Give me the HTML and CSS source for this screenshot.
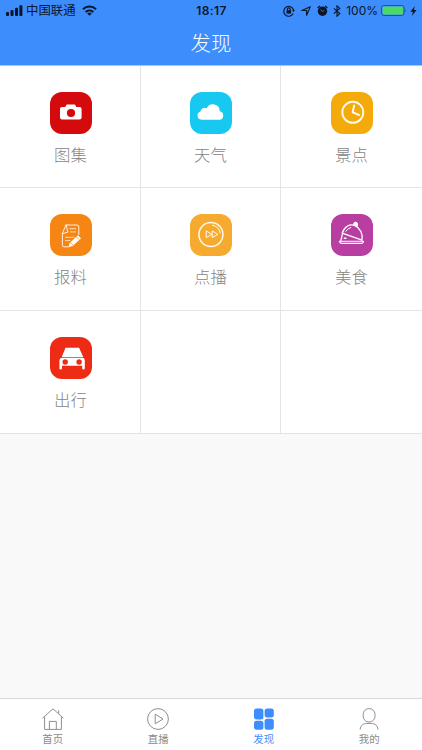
FILE: index.html
```html
<!DOCTYPE html>
<html lang="zh-CN">
<head>
  <meta charset="UTF-8" />
  <meta name="viewport" content="width=device-width, initial-scale=1.0"/>
  <title>发现</title>
  <link rel="stylesheet" href="styles.css">
</head>
<body>
  <div class="app">
    <header class="header">
      <div class="status-bar">
        <div class="status-left">
          <svg class="signal" width="17" height="11" viewBox="0 0 17 11">
            <rect x="0" y="7" width="3" height="4" rx="1"/>
            <rect x="4.5" y="5" width="3" height="6" rx="1"/>
            <rect x="9" y="2.8" width="3" height="8.2" rx="1"/>
            <rect x="13.4" y="0.3" width="3" height="10.7" rx="1"/>
          </svg>
          <span class="carrier">中国联通</span>
          <svg class="wifi" width="15" height="11" viewBox="0 0 15 11" fill="none" stroke="#0a1528" stroke-width="2">
            <path d="M1 4.3C4.6 .7 10.4 .7 14 4.3"/>
            <path d="M3.6 7C5.8 4.9 9.2 4.9 11.4 7"/>
            <path d="M5.2 8.5Q7.5 6.7 9.8 8.5L7.5 10.8z" fill="#0a1528" stroke="none"/>
          </svg>
        </div>
        <span class="time">18:17</span>
        <div class="status-right">
          <svg width="12" height="12" viewBox="0 0 12 12" fill="none" stroke="#0a1528" stroke-width="1.1">
            <path d="M10.2 8.6A5 5 0 1 1 10.6 5"/>
            <path d="M9 5h3l-1.5 2z" fill="#0a1528" stroke="none"/>
            <rect x="3.5" y="5.2" width="4.6" height="3.4" fill="#0a1528" stroke="none"/>
            <path d="M4.4 5.4V4.3a1.4 1.4 0 0 1 2.8 0v1.1"/>
          </svg>
          <svg class="location" width="10" height="10" viewBox="0 0 10 10" fill="none" stroke="#0a1528" stroke-width="1.1" stroke-linejoin="round">
            <path d="M9.3 .7L5.6 9.2V4.5H.8z"/>
          </svg>
          <svg class="alarm" width="11" height="12" viewBox="0 0 11 12">
            <circle cx="5.5" cy="6.2" r="4.7"/>
            <path d="M.6 3L3 .9M10.4 3L8 .9" stroke="#0a1528" stroke-width="1.3"/>
            <path d="M3.4 4.6L5.5 6.5 7.3 5.5" fill="none" stroke="#3e8dfd" stroke-width=".8"/>
          </svg>
          <svg class="bluetooth" width="8" height="12" viewBox="0 0 8 12" fill="none" stroke="#0a1528" stroke-width="1.1">
            <path d="M.8 3.3L6.8 8.6 4 11.2V.8L6.8 3.4.8 8.7"/>
          </svg>
          <span class="percent">100%</span>
          <svg class="battery" width="26" height="11" viewBox="0 0 26 11">
            <rect x=".5" y=".5" width="22.6" height="10" rx="2.4" fill="none" stroke="#245293"/>
            <rect x="1.6" y="1.6" width="20.4" height="7.8" rx="1.3" fill="#4cda64"/>
            <path d="M24 3.7q1.5 1.8 0 3.6z" fill="#245293"/>
          </svg>
          <svg class="bolt" width="7" height="10" viewBox="0 0 7 10">
            <path d="M4.8 0L.4 5.7H3L1.8 10 6.6 4.1H3.9z"/>
          </svg>
        </div>
      </div>
      <h1 class="title">发现</h1>
    </header>

    <main class="grid">
      <a class="cell">
        <svg class="icon red" viewBox="0 0 42 42">
          <path d="M12 15h3.2l1.5-2.4h8.2l1.5 2.4h3.2q2 0 2 2v8.4q0 2-2 2H12q-2 0-2-2V17q0-2 2-2z" fill="#fff"/>
          <circle cx="21" cy="21" r="4.1" fill="#d40a0d"/>
        </svg>
        <span class="label">图集</span>
      </a>
      <a class="cell">
        <svg class="icon cyan" viewBox="0 0 42 42">
          <path d="M11.5 27.7a4.2 4.2 0 0 1-1-8.2 4.2 4.2 0 0 1 6.2-3.2 6.8 6.8 0 0 1 13 3 4.3 4.3 0 0 1 .3 8.4z" fill="#fff"/>
        </svg>
        <span class="label">天气</span>
      </a>
      <a class="cell">
        <svg class="icon amber" viewBox="0 0 42 42" fill="none" stroke="#fffbe8" stroke-linecap="round" stroke-linejoin="round">
          <circle cx="21.8" cy="20.3" r="10.5" stroke-width="1.9"/>
          <path d="M23.1 13.6L21.7 20.3 28 23" stroke-width="2"/>
        </svg>
        <span class="label">景点</span>
      </a>
      <a class="cell">
        <svg class="icon orange" viewBox="0 0 42 42" fill="none" stroke="#fff3e2" stroke-width="1" stroke-linecap="round" stroke-linejoin="round">
          <path d="M16 11h10.8q2 0 2 2v7.6M12.4 19.7v11.5q0 1.6 1.6 1.6h4.8M12.4 19.4l3.6-8.6 1.8 7z"/>
          <path d="M19.8 14.7h5.7M20.4 17.9h5.2M15.5 23.3h8.5M15.5 26.6h4.5" stroke-width=".8"/>
          <path d="M18.8 33l.8-4 8.4-7.8 3 3.2-8.4 7.6z" fill="#fff" stroke="none"/>
          <path d="M20.6 28.5l2.4 2.5M26.6 22.9l2.4 2.5" stroke="#f58614" stroke-width=".7"/>
        </svg>
        <span class="label">报料</span>
      </a>
      <a class="cell">
        <svg class="icon yellow" viewBox="0 0 42 42" fill="none" stroke="#fffbe8" stroke-linecap="round" stroke-linejoin="round">
          <circle cx="20.9" cy="20.5" r="12" stroke-width="1.5"/>
          <path d="M22.5 11.2a9.5 9.5 0 0 1 7.7 7.7" stroke-width="1"/>
          <path d="M16.2 17.3v6.4l5.4-3.2zM22.2 17.3v6.4l5.4-3.2z" stroke-width="1"/>
        </svg>
        <span class="label">点播</span>
      </a>
      <a class="cell">
        <svg class="icon purple" viewBox="0 0 42 42" fill="none" stroke="#fff" stroke-width="1.3" stroke-linecap="round" stroke-linejoin="round">
          <path d="M11.2 19.2C13 13 18.5 9.3 24 11.6c5.4 2.3 8 8.4 7 14.6z"/>
          <path d="M22.8 11.2q-.1-2.8 1.9-2.7 2.3.3 1.4 3.5" fill="#fff"/>
          <path d="M14.8 17.3q2-3.2 5-3.8" stroke-width="1"/>
          <path d="M11.4 20.2L9.8 26.8"/>
          <path d="M13.4 24.2h1.5" stroke-width="1.6"/>
          <path d="M8.3 27.2h24.2q-.3 2.2-2.4 2.2H10.7q-2 0-2.4-2.2z" stroke-width="1.1"/>
        </svg>
        <span class="label">美食</span>
      </a>
      <a class="cell">
        <svg class="icon scarlet" viewBox="0 0 42 42">
          <path d="M15.5 10.8h13.6L33.3 20.2H11.7z" fill="#fff"/>
          <path d="M10.6 20.9h23.2l1 2v8.3q0 1.2-1.3 1.2t-1.3-1.2v-2.4H12v2.4q0 1.2-1.3 1.2t-1.3-1.2v-8.3z" fill="#fff"/>
          <circle cx="15.2" cy="25" r="2.7" fill="#ee2b15"/>
          <circle cx="29.1" cy="25" r="2.7" fill="#ee2b15"/>
        </svg>
        <span class="label">出行</span>
      </a>
      <div class="cell"></div>
      <div class="cell"></div>
    </main>

    <nav class="tab-bar">
      <a class="tab">
        <svg class="tab-icon" viewBox="0 0 22 22">
          <path d="M.5 10.2L11 .8l10.5 9.4M2.6 8.8v12.6h16.8V8.8M7.4 21.4v-8h6.9v8M16.7 5.6V2.2"/>
        </svg>
        <span>首页</span>
      </a>
      <a class="tab">
        <svg class="tab-icon" viewBox="0 0 22 22">
          <circle cx="11" cy="11" r="10.4"/>
          <path d="M8.2 6.2v9.6l7.8-4.8z"/>
        </svg>
        <span>直播</span>
      </a>
      <a class="tab active">
        <svg class="tab-icon" viewBox="0 0 22 22">
          <rect x="1" y=".4" width="9.4" height="11" rx="2.5"/>
          <rect x="11.6" y=".4" width="9.2" height="9" rx="2.5"/>
          <rect x="1" y="12.8" width="9.4" height="9" rx="2.5"/>
          <rect x="11.6" y="10.8" width="9.2" height="11" rx="2.5"/>
        </svg>
        <span>发现</span>
      </a>
      <a class="tab">
        <svg class="tab-icon" viewBox="0 0 22 22">
          <rect x="5.2" y=".6" width="11.8" height="13.4" rx="5.7"/>
          <path d="M2.2 21.6c.2-4.3 3.2-6.1 6.5-6.2h4.7c3.4.1 6.3 1.9 6.5 6.2"/>
        </svg>
        <span>我的</span>
      </a>
    </nav>
  </div>
</body>
</html>
```
FILE: styles.css
```css
* {
  box-sizing: border-box;
  padding: 0;
  margin: 0;
}

body {
  background-color: #f9f9f9;
  font-family: "Liberation Sans", "Noto Sans CJK SC", sans-serif;
}

.app {
  display: flex;
  flex-direction: column;
  height: 750px;
}

.header {
  height: 66px;
  background-color: #3e8dfd;
  border-bottom: 1px solid #a5c8f8;
}

.status-bar {
  display: grid;
  grid-template-columns: 1fr auto 1fr;
  align-items: center;
  height: 21px;
  padding: 0 5px 0 6px;
  color: #0a1528;
  fill: #0a1528;
  font-size: 12px;
}

.status-left,
.status-right {
  display: flex;
  align-items: center;
}

.status-right {
  justify-content: flex-end;
}

.carrier {
  margin: 0 6px 0 3px;
  padding-top: 2px;
  font-size: 12.4px;
  line-height: 19px;
}

.time {
  font-family: Inter, sans-serif;
  font-size: 12px;
  font-weight: 600;
  letter-spacing: 0.4px;
}

.location {
  margin-left: 6px;
}

.alarm {
  margin-left: 6px;
}

.bluetooth {
  margin-left: 5px;
}

.percent {
  margin: 0 3px 0 5px;
  font-family: Inter, sans-serif;
  font-size: 12px;
}

.bolt {
  margin-left: 3px;
}

.title {
  padding-top: 1px;
  color: #fff;
  font-size: 20.4px;
  font-weight: 300;
  line-height: 44px;
  text-align: center;
}

.grid {
  display: grid;
  grid-template-columns: 141px 140px 141px;
  grid-template-rows: 122px 123px 123px;
  background-color: #fff;
}

.cell {
  display: flex;
  flex-direction: column;
  align-items: center;
  padding-top: 26px;
  border-right: 1px solid #e4e4e4;
  border-bottom: 1px solid #e4e4e4;
}

.cell:nth-child(3n) {
  border-right: none;
}

.cell:nth-child(3n + 1) {
  padding-left: 1px;
}

.icon {
  width: 42px;
  height: 42px;
  border-radius: 12px;
}

.red {
  background-color: #d40a0d;
}

.cyan {
  background-color: #17c9f1;
}

.amber {
  background-color: #f5aa0b;
}

.orange {
  background-color: #f58614;
}

.yellow {
  background-color: #f6aa2f;
}

.purple {
  background-color: #b93ea2;
}

.scarlet {
  background-color: #ee2b15;
}

.label {
  margin-top: 9px;
  color: #858585;
  font-size: 16.4px;
  font-weight: 300;
  line-height: 24px;
}

.tab-bar {
  display: flex;
  height: 52px;
  margin-top: auto;
  background-color: #fff;
  border-top: 1px solid #d8d8d8;
}

.tab {
  flex: 1;
  display: flex;
  flex-direction: column;
  align-items: center;
  padding-top: 9px;
  color: #8a8a8a;
  font-size: 10.4px;
  line-height: 20px;
}

.tab-icon {
  width: 22px;
  height: 22px;
  fill: none;
  stroke: #8f8f8f;
  stroke-width: 1;
}

.tab.active {
  color: #3e8dfd;
}

.active .tab-icon {
  fill: #3e8dfd;
  stroke: none;
}
```
